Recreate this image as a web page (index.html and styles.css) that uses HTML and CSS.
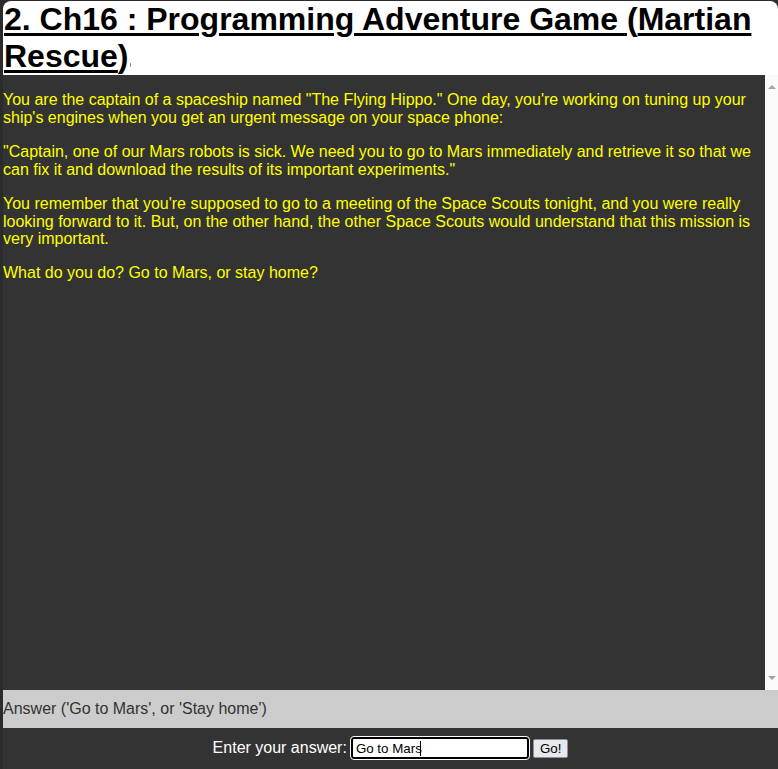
FILE: index.html
```html
<!DOCTYPE html>
<html>
<head>
<meta charset="utf-8">
<link rel="stylesheet" href="styles.css">
</head>
<body>
<div class="page">
  <h1 class="title"><a href="#">2. Ch16 : Programming Adventure Game </a>(<a href="#">Martian Rescue</a>)<span class="mark"></span></h1>
  <div class="story-wrap">
    <div class="story">
      <p>You are the captain of a spaceship named "The Flying Hippo." One day, you're working on tuning up your ship's engines when you get an urgent message on your space phone:</p>
      <p>"Captain, one of our Mars robots is sick. We need you to go to Mars immediately and retrieve it so that we can fix it and download the results of its important experiments."</p>
      <p>You remember that you're supposed to go to a meeting of the Space Scouts tonight, and you were really looking forward to it. But, on the other hand, the other Space Scouts would understand that this mission is very important.</p>
      <p>What do you do? Go to Mars, or stay home?</p>
    </div>
    <div class="scrollbar">
      <span class="arrow arrow-up"></span>
      <span class="arrow arrow-down"></span>
    </div>
  </div>
  <div class="prompt">Answer ('Go to Mars', or 'Stay home')</div>
  <form class="entry">
    <label class="entry-label" for="ans">Enter your answer:</label>
    <span class="entry-field"><input id="ans" class="entry-input" type="text" value="Go to Mars"><span class="caret"></span></span>
    <button class="entry-btn" type="button">Go!</button>
  </form>
</div>
</body>
</html>
```
FILE: styles.css
```css
html, body {
  margin: 0;
  padding: 0;
  height: 100%;
}
body {
  background: #2b2b2b;
  font-family: "Liberation Sans", Arial, sans-serif;
  overflow: hidden;
}
.page {
  margin-left: 3px;
  padding-top: 1px;
  height: 768px;
  display: flex;
  flex-direction: column;
}
.title {
  margin: 0;
  height: 74px;
  flex: none;
  background: #fff;
  border-radius: 8px 8px 0 0;
  font-size: 32px;
  font-weight: bold;
  line-height: 37px;
  color: #000;
  padding-left: 1px;
}
.title a {
  color: #000;
  text-decoration: underline;
  text-decoration-thickness: 3px;
  text-underline-offset: 3px;
}
.mark {
  display: inline-block;
  width: 1px;
  height: 4px;
  background: #999;
  margin-left: 1px;
}
.story-wrap {
  height: 615px;
  flex: none;
  display: flex;
}
.story {
  flex: 1;
  background: #333;
  overflow: hidden;
  color: #ffff00;
  font-size: 16px;
  line-height: 17.9px;
}
.story p {
  margin: 16px 0;
}
.scrollbar {
  width: 13px;
  background: #fafafa;
  display: flex;
  flex-direction: column;
  justify-content: space-between;
  align-items: center;
  padding: 10px 0 10px;
  box-sizing: border-box;
}
.arrow {
  width: 0;
  height: 0;
  border-left: 4px solid transparent;
  border-right: 4px solid transparent;
}
.arrow-up {
  border-bottom: 4px solid #a3a3a3;
}
.arrow-down {
  border-top: 4px solid #a3a3a3;
}
.prompt {
  height: 38px;
  flex: none;
  background: #cccccc;
  color: #333;
  font-size: 16px;
  line-height: 38px;
}
.entry {
  flex: 1;
  margin: 0;
  background: #333;
  display: flex;
  justify-content: center;
  align-items: center;
  padding-bottom: 1px;
}
.entry-label {
  color: #fff;
  font-size: 16px;
  margin-right: 4px;
}
.entry-field {
  position: relative;
  display: inline-block;
  margin-right: 4px;
}
.entry-input {
  display: block;
  width: 169px;
  height: 18px;
  box-sizing: content-box;
  padding: 0 2px 0 3px;
  border: 2px solid #000;
  border-radius: 3px;
  outline: 1px solid #fff;
  background: #fff;
  font-family: "Liberation Sans", Arial, sans-serif;
  font-size: 13.33px;
  color: #000;
}
.caret {
  position: absolute;
  left: 69px;
  top: 4px;
  width: 1px;
  height: 15px;
  background: #000;
}
.entry-btn {
  height: 19px;
  padding: 0 6px;
  background: #e9e9ed;
  border: 1px solid #8f8f9d;
  border-radius: 2px;
  font-family: "Liberation Sans", Arial, sans-serif;
  font-size: 13.33px;
  color: #000;
}
```
